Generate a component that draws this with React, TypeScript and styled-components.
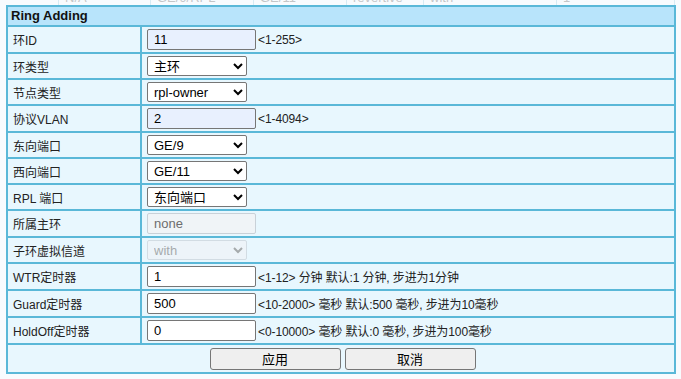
import styled, { createGlobalStyle } from "styled-components";

const GlobalStyle = createGlobalStyle`
  html, body {
    margin: 0;
    padding: 0;
    background-color: #f8fbfe;
    font-family: "Liberation Sans", "Noto Sans CJK SC", sans-serif;
    font-size: 12px;
    color: #000;
  }
`;

const border = "#5ab8d8";

const Backdrop = styled.div`
  height: 5px;
  overflow: hidden;
  display: flex;
  opacity: 0.35;
`;

const BackdropCell = styled.div<{ $w: number }>`
  width: ${({ $w }) => $w}px;
  flex-shrink: 0;
  margin-top: -9px;
  height: 14px;
  border-right: 1px solid #9ccfe3;
  padding-left: 6px;
  box-sizing: border-box;
  font-size: 13px;
  line-height: 14px;
  color: #666;
  white-space: nowrap;
`;

const Panel = styled.div`
  margin-left: 6px;
  width: 670px;
  box-sizing: border-box;
  border: 2px solid ${border};
  background-color: #e8f7fe;
`;

const Title = styled.div`
  height: 18px;
  background-color: #b8e4fb;
  padding-left: 3px;
  font-size: 13px;
  font-weight: bold;
  line-height: 18px;
  color: #111;
`;

const Row = styled.div<{ $h: number }>`
  display: flex;
  height: ${({ $h }) => $h}px;
  border-top: 2px solid ${border};
`;

const Label = styled.div`
  width: 134px;
  flex-shrink: 0;
  border-right: 2px solid ${border};
  padding-left: 5px;
  box-sizing: border-box;
  display: flex;
  align-items: center;
  font-size: 12px;
  color: #222;
  white-space: nowrap;
`;

const Value = styled.div`
  flex: 1;
  display: flex;
  align-items: center;
  padding-left: 5px;
  gap: 2px;
  font-size: 12px;
  letter-spacing: -0.1px;
  color: #222;
  white-space: nowrap;
`;

const Input = styled.input<{ $filled?: boolean }>`
  width: 109px;
  height: 21px;
  box-sizing: border-box;
  border: 1px solid #767676;
  border-radius: 2px;
  padding: 0 6px;
  font-family: inherit;
  font-size: 13px;
  letter-spacing: 0;
  color: #000;
  background-color: ${({ $filled }) => ($filled ? "#e8f0fe" : "#fff")};
  outline: none;

  &:disabled {
    background-color: #f0f4f7;
    border-color: #c9d1d8;
    color: #6d6d6d;
  }
`;

const Select = styled.select`
  width: 100px;
  height: 20px;
  box-sizing: border-box;
  border: 1px solid #767676;
  border-radius: 2px;
  font-family: inherit;
  font-size: 13px;
  letter-spacing: 0;
  color: #000;
  background-color: #fff;
  padding: 0 2px;

  &:disabled {
    background-color: #f0f4f7;
    border-color: #c9d1d8;
    color: #8a8a8a;
  }
`;

const ButtonRow = styled.div`
  display: flex;
  justify-content: center;
  align-items: center;
  gap: 4px;
  height: 27px;
  border-top: 2px solid ${border};
  padding-left: 3px;
`;

const Button = styled.button`
  width: 131px;
  height: 22px;
  border: 1px solid #767676;
  border-radius: 3px;
  background-color: #efefef;
  font-family: inherit;
  font-size: 13px;
  color: #000;
  padding: 0;
`;

type Field =
  | { label: string; kind: "input"; value: string; hint?: string; filled?: boolean; disabled?: boolean }
  | { label: string; kind: "select"; value: string; options: string[]; disabled?: boolean };

const fields: Field[] = [
  { label: "环ID", kind: "input", value: "11", hint: "<1-255>", filled: true },
  { label: "环类型", kind: "select", value: "主环", options: ["主环", "子环"] },
  { label: "节点类型", kind: "select", value: "rpl-owner", options: ["rpl-owner", "normal"] },
  { label: "协议VLAN", kind: "input", value: "2", hint: "<1-4094>", filled: true },
  { label: "东向端口", kind: "select", value: "GE/9", options: ["GE/9", "GE/10", "GE/11"] },
  { label: "西向端口", kind: "select", value: "GE/11", options: ["GE/9", "GE/10", "GE/11"] },
  { label: "RPL 端口", kind: "select", value: "东向端口", options: ["东向端口", "西向端口"] },
  { label: "所属主环", kind: "input", value: "none", disabled: true },
  { label: "子环虚拟信道", kind: "select", value: "with", options: ["with", "without"], disabled: true },
  { label: "WTR定时器", kind: "input", value: "1", hint: "<1-12> 分钟 默认:1 分钟, 步进为1分钟" },
  { label: "Guard定时器", kind: "input", value: "500", hint: "<10-2000> 毫秒 默认:500 毫秒, 步进为10毫秒" },
  { label: "HoldOff定时器", kind: "input", value: "0", hint: "<0-10000> 毫秒 默认:0 毫秒, 步进为100毫秒" },
];

const backdrop = [
  { w: 59, t: "" },
  { w: 92, t: "N/A" },
  { w: 103, t: "GE/9/RPL" },
  { w: 93, t: "GE/11" },
  { w: 77, t: "revertive" },
  { w: 133, t: "with" },
  { w: 118, t: "1" },
];

export default function App() {
  return (
    <>
      <GlobalStyle />
      <Backdrop>
        {backdrop.map((c, i) => (
          <BackdropCell key={i} $w={c.w}>
            {c.t}
          </BackdropCell>
        ))}
      </Backdrop>
      <Panel>
        <Title>Ring Adding</Title>
        {fields.map((f) => (
          <Row key={f.label} $h={f.kind === "input" ? 25 : 24}>
            <Label>{f.label}</Label>
            <Value>
              {f.kind === "input" ? (
                <>
                  <Input defaultValue={f.value} $filled={f.filled} disabled={f.disabled} />
                  {f.hint && <span>{f.hint}</span>}
                </>
              ) : (
                <Select defaultValue={f.value} disabled={f.disabled}>
                  {f.options.map((o) => (
                    <option key={o}>{o}</option>
                  ))}
                </Select>
              )}
            </Value>
          </Row>
        ))}
        <ButtonRow>
          <Button>应用</Button>
          <Button>取消</Button>
        </ButtonRow>
      </Panel>
    </>
  );
}
